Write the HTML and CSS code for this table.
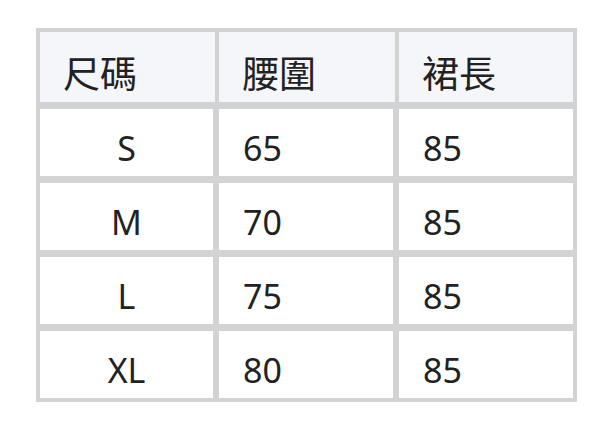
FILE: index.html
```html
<!DOCTYPE html>
<html lang="zh-Hant">
<head>
<meta charset="utf-8">
<title>尺碼表</title>
<link rel="stylesheet" href="styles.css">
</head>
<body>
<div class="size-table">
  <div class="row head">
    <div class="cell c1">尺碼</div>
    <div class="cell c2">腰圍</div>
    <div class="cell c3">裙長</div>
  </div>
  <div class="row body">
    <div class="cell c1">S</div>
    <div class="cell c2">65</div>
    <div class="cell c3">85</div>
  </div>
  <div class="row body">
    <div class="cell c1">M</div>
    <div class="cell c2">70</div>
    <div class="cell c3">85</div>
  </div>
  <div class="row body">
    <div class="cell c1">L</div>
    <div class="cell c2">75</div>
    <div class="cell c3">85</div>
  </div>
  <div class="row body">
    <div class="cell c1">XL</div>
    <div class="cell c2">80</div>
    <div class="cell c3">85</div>
  </div>
</div>
</body>
</html>
```
FILE: styles.css
```css
html, body {
  margin: 0;
  padding: 0;
  background: #ffffff;
}
body {
  padding: 28px 0 0 36px;
  font-family: "Noto Sans", "Noto Sans CJK TC", sans-serif;
  font-size: 34px;
  color: #222222;
}
.size-table {
  width: 533px;
  background: #d3d3d3;
  padding: 4px;
  display: flex;
  flex-direction: column;
  gap: 7px;
}
.row {
  display: flex;
}
.row.head {
  gap: 4px;
}
.row.body {
  gap: 6px;
}
.cell {
  display: flex;
  align-items: center;
  box-sizing: border-box;
  padding: 10px 0 0 24px;
  background: #ffffff;
  white-space: nowrap;
}
.head .cell {
  height: 70px;
  background: #f5f6fa;
  font-size: 37px;
  padding: 10px 0 0 23px;
}
.head .c1 { width: 175px; }
.head .c2 { width: 176px; }
.head .c3 { width: 174px; }
.body .cell {
  height: 67px;
}
.body .c1 {
  width: 173px;
  justify-content: center;
  padding-left: 0;
}
.body .c2 { width: 174px; }
.body .c3 { width: 174px; }
```
